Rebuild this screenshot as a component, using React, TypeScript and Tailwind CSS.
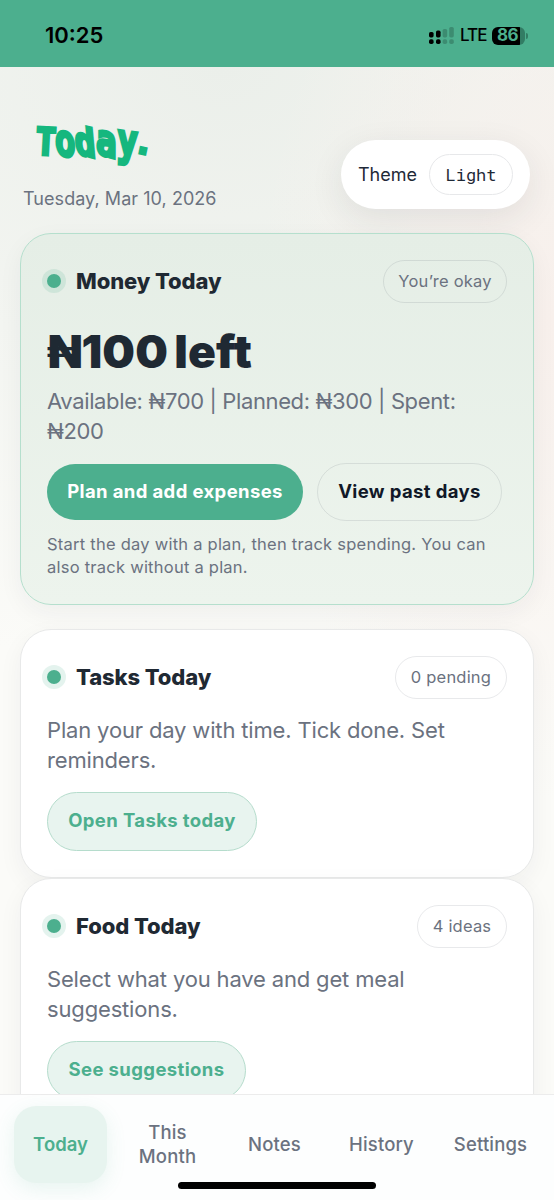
import type { ReactNode } from "react";
import clsx from "clsx";

const navItems = ["Today", "This Month", "Notes", "History", "Settings"];

// hand-cut look of the wordmark: each letter is stretched and tilted a bit
const wordmark = [
  { char: "T", style: "scale-y-[1.12] rotate-3" },
  { char: "o", style: "translate-y-px scale-y-[1.28] skew-y-12" },
  { char: "d", style: "translate-y-px scale-y-[1.16] skew-y-12 skew-x-6" },
  { char: "a", style: "translate-y-px scale-y-[1.28] skew-y-12" },
  { char: "y", style: "translate-y-px scale-y-[1.3] skew-y-6 skew-x-[-2deg]" },
  { char: ".", style: "-ml-[5px] -translate-y-px rotate-12" },
];

function SignalIcon() {
  return (
    <svg width="25" height="18" viewBox="0 0 25 18" fill="#000">
      <rect x="0" y="5" width="4.6" height="5.4" rx="1.6" />
      <rect x="7" y="3.6" width="4.6" height="6.8" rx="1.6" />
      <rect x="13.6" y="2" width="4.6" height="8.4" rx="1.6" opacity=".2" />
      <rect x="20.2" y="0" width="4.6" height="10.4" rx="1.6" opacity=".2" />
      <rect x="0" y="12.2" width="4.6" height="4.8" rx="1.8" />
      <rect x="7" y="12.2" width="4.6" height="4.8" rx="1.8" />
      <rect x="13.6" y="12.2" width="4.6" height="4.8" rx="1.8" opacity=".2" />
      <rect x="20.2" y="12.2" width="4.6" height="4.8" rx="1.8" opacity=".2" />
    </svg>
  );
}

function StatusBar() {
  return (
    <div className="flex h-[67px] shrink-0 items-center justify-between bg-[#4caf8e] pt-1 pr-[26px] pl-[45px]">
      <span className="text-[22px] font-semibold text-black">10:25</span>
      <div className="flex items-center">
        <SignalIcon />
        <span className="ml-[6px] w-[26px] text-[17px] font-medium tracking-[-0.9px] text-black">LTE</span>
        <span className="ml-[6px] flex h-[18px] w-[33px] items-center justify-center rounded-[6px] bg-linear-to-r from-black from-85% to-[#327c64] to-85% pr-[2px] text-[17px] leading-none font-bold tracking-[-0.5px] text-[#4caf8e]">
          86
        </span>
        <span className="ml-px h-[6px] w-[2px] rounded-r-full bg-[#327c64]" />
      </div>
    </div>
  );
}

function Header() {
  return (
    <header className="flex h-[166px] shrink-0 justify-between pr-6 pl-[23px]">
      <div className="pt-[54px]">
        <h1 className="ml-[12px] flex h-[64px] font-['DejaVu_Sans_Mono',monospace] text-[34px] leading-[44px] font-bold text-[#15b77e] [-webkit-text-stroke:2.5px_#15b77e]">
          {wordmark.map(({ char, style }) => (
            <span key={char} className={clsx("block origin-[50%_34px]", style)}>
              {char}
            </span>
          ))}
        </h1>
        <p className="text-[18px] leading-[28px] tracking-[0.05px] whitespace-nowrap text-[#6b7280]">Tuesday, Mar 10, 2026</p>
      </div>
      <div className="mt-[73px] flex h-[69px] w-[189px] items-center justify-between rounded-full bg-white pr-[17px] pl-[17px] shadow-[0_10px_35px_rgba(30,40,50,0.09)]">
        <span className="text-[18px] text-[#1f2937]">Theme</span>
        <button className="flex h-[41px] w-[84px] items-center justify-center rounded-full border-[1.5px] border-[#e7e8ea] font-['Roboto_Mono','DejaVu_Sans_Mono',monospace] text-[17px] text-[#1f2937]">
          Light
        </button>
      </div>
    </header>
  );
}

type CardProps = {
  title: string;
  badge: string;
  badgeClass: string;
  className: string;
  children: ReactNode;
};

function Card({ title, badge, badgeClass, className, children }: CardProps) {
  return (
    <section
      className={clsx(
        "mx-[20px] shrink-0 rounded-[31px] border-[1.5px] pt-[25.5px] pr-[26px] pl-[26px] shadow-[0_8px_24px_rgba(30,40,50,0.05)]",
        className
      )}
    >
      <div className="flex h-[43px] items-center justify-between">
        <div className="flex items-center">
          <span className="size-[14px] rounded-full bg-[#4caf8e] ring-[5px] ring-[#4caf8e]/15" />
          <h2 className="ml-[15px] text-[22px] font-extrabold tracking-[-0.1px] text-[#1f2933]">{title}</h2>
        </div>
        <span
          className={clsx(
            "flex h-[43px] items-center justify-center rounded-full border-[1.5px] border-[#1f2937]/10 text-[16.5px] tracking-[0.2px] text-[#6b7280]",
            badgeClass
          )}
        >
          {badge}
        </span>
      </div>
      {children}
    </section>
  );
}

function BottomNav() {
  return (
    <nav className="fixed inset-x-0 bottom-0 h-[106px] border-t border-[#ececec] bg-[#fdfefe] px-[14px] pt-[11px]">
      <div className="grid grid-cols-[93px_93px_93px_93px_97px] gap-[14px]">
        {navItems.map((item, i) => (
          <a
            key={item}
            className={clsx(
              "flex h-[77px] items-center justify-center rounded-[22px] pb-[2px] text-center text-[18.5px] leading-[24px]",
              i === 0
                ? "bg-[#e7f4ef] font-semibold text-[#4caf8e] shadow-[0_6px_20px_rgba(76,175,142,0.12)]"
                : "font-medium tracking-[0.15px] text-[#6b7280]"
            )}
          >
            {item}
          </a>
        ))}
      </div>
      {/* home indicator */}
      <div className="mx-auto mt-[-1px] h-[7px] w-[198px] rounded-full bg-black" />
    </nav>
  );
}

export default function App() {
  return (
    <div className="flex h-[1200px] flex-col overflow-hidden bg-[#fbfbf8] bg-[radial-gradient(ellipse_300px_480px_at_100%_320px,#f8f0ec,transparent),radial-gradient(ellipse_850px_600px_at_40%_67px,#ebefea,transparent)] font-['Inter','Liberation_Sans',sans-serif]">
      <StatusBar />
      <Header />

      <Card
        title="Money Today"
        badge="You’re okay"
        badgeClass="w-[124px]"
        className="h-[372px] border-[#b5dfcd] bg-linear-to-b from-[#e5eee6] to-[#edf4ed]"
      >
        <div className="mt-[19px] text-[46px] leading-[58px] font-black tracking-[0.1px] whitespace-nowrap text-[#1f2933] [word-spacing:-3px]">
          ₦100 left
        </div>
        <p className="mt-[6px] text-[22px] leading-[30px] tracking-[-0.37px] whitespace-nowrap text-[#6b7280]">
          Available: ₦700 | Planned: ₦300 | Spent:
          <br />
          ₦200
        </p>
        <div className="mt-[17px] flex items-center gap-[14px]">
          <button className="h-[56px] w-[256px] rounded-full bg-[#4caf8e] pt-px text-[18.5px] font-bold tracking-[0.38px] whitespace-nowrap text-white">
            Plan and add expenses
          </button>
          <button className="h-[58px] w-[185px] rounded-full border-[1.5px] border-[#1f2937]/10 pt-px text-[18.5px] font-bold tracking-[0.38px] whitespace-nowrap text-[#111827]">
            View past days
          </button>
        </div>
        <p className="mt-[12px] text-[16.5px] leading-[23px] tracking-[0.24px] whitespace-nowrap text-[#6b7280]">
          Start the day with a plan, then track spending. You can
          <br />
          also track without a plan.
        </p>
      </Card>

      <Card title="Tasks Today" badge="0 pending" badgeClass="w-[112px]" className="mt-[24px] h-[249px] border-[#e8e9e9] bg-white">
        <p className="mt-[16px] text-[22px] leading-[30px] tracking-[-0.16px] whitespace-nowrap text-[#6b7280]">
          Plan your day with time. Tick done. Set
          <br />
          reminders.
        </p>
        <button className="mt-[17px] h-[59px] w-[210px] rounded-full border-[1.5px] border-[#b5dccc] bg-[#e8f4ef] text-[18.5px] font-bold tracking-[0.38px] text-[#4caf8e]">
          Open Tasks today
        </button>
      </Card>

      <Card title="Food Today" badge="4 ideas" badgeClass="w-[90px]" className="h-[249px] border-[#e8e9e9] bg-white">
        <p className="mt-[16px] text-[22px] leading-[30px] tracking-[-0.16px] whitespace-nowrap text-[#6b7280]">
          Select what you have and get meal
          <br />
          suggestions.
        </p>
        <button className="mt-[17px] h-[59px] w-[199px] rounded-full border-[1.5px] border-[#b5dccc] bg-[#e8f4ef] text-[18.5px] font-bold tracking-[0.38px] text-[#4caf8e]">
          See suggestions
        </button>
      </Card>

      <BottomNav />
    </div>
  );
}
